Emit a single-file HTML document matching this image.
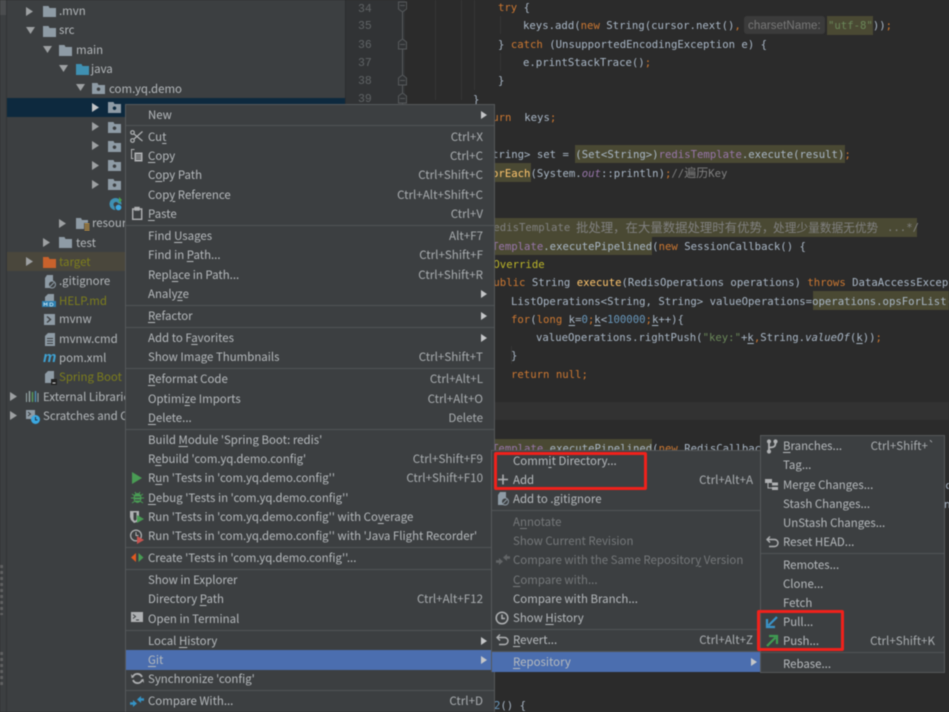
<!DOCTYPE html>
<html><head><meta charset="utf-8"><style>
*{box-sizing:border-box}
html,body{margin:0;padding:0;width:949px;height:712px;overflow:hidden;background:#2b2b2b}
#w{position:relative;width:949px;height:712px;overflow:hidden;filter:blur(.4px)}
.a{position:absolute}
.c{position:absolute;font:10.65px/18px "DejaVu Sans Mono","Liberation Mono","Noto Sans CJK SC",monospace;color:#a9b7c6;white-space:pre;height:18px;margin-top:.5px}
.k{color:#cc7832}.s{color:#6a8759}.m{color:#ffc66d}.p{color:#9876aa}.g{color:#808080}
.h{position:absolute;background:#4a4933}
.n{position:absolute;left:358px;font:11.5px/18px "Liberation Mono",monospace;color:#5f6365;margin-top:2px}
.t{position:absolute;font:11.45px/19px "Noto Sans CJK SC","Liberation Sans",sans-serif;color:#b4b8bb;white-space:nowrap;height:19px}
.y{color:#7d7e1c}
.menu{position:absolute;background:#3c3f41;border:1px solid #55585a}
.r{position:absolute;left:0;right:0;height:19px;font:11.45px/19px "Noto Sans CJK SC","Liberation Sans",sans-serif;color:#b6babd;white-space:nowrap}
.r b{position:absolute;font-weight:normal;top:0}
.r i{position:absolute;font-style:normal;top:0;color:#a9adb0;font-size:11.6px}
.sel b{top:1px}
.m1 b{left:22px}.m1 i{right:11px}
.m2 b{left:21px}.m2 i{right:7px}
.m3 b{left:22px}.m3 i{right:9px}
.d b{color:#75787a}
.sel{background:#4b6eaf}
.sep{position:absolute;left:0;right:0;height:1px;background:#515456}
.ar{position:absolute;width:0;height:0;border-left:6px solid #c4c6c8;border-top:4px solid transparent;border-bottom:4px solid transparent}
u{text-underline-offset:1.5px;text-decoration-thickness:1px}
svg{position:absolute;overflow:visible}
.red{position:absolute;border:3px solid #f0211b;border-radius:2px}
.sp{position:absolute;left:0;width:3px;background:repeating-linear-gradient(#777 0 3px,#3c3f41 3px 6px);opacity:.6}
</style></head><body><div id="w">

<!-- left strip + project panel -->
<div class="a" style="left:0;top:0;width:345px;height:712px;background:#3c3f41"></div>
<div class="a" style="left:6px;top:0;width:1px;height:712px;background:#323436"></div>
<div class="a" style="left:0;top:0;width:6px;height:15px;background:#4b4d4f"></div>
<div class="sp" style="top:565px;height:50px"></div>
<div class="sp" style="top:652px;height:36px"></div>
<div class="a" style="left:7px;top:98px;width:338px;height:19px;background:#0d293e"></div>
<div class="a" style="left:7px;top:252px;width:338px;height:19px;background:#4a473c"></div>

<!-- folder symbols -->
<svg width="0" height="0"><defs>
<symbol id="f" viewBox="0 0 13 11"><path d="M0 0h5.5l1 2H13v9H0z"/></symbol>
<symbol id="fp" viewBox="0 0 13 11"><path fill-rule="evenodd" d="M0 0h5.5l1 2H13v9H0zM6.5 4.4a1.8 1.8 0 1 0 .01 0z"/></symbol>
</defs></svg>

<svg style="left:26px;top:7px" width="8" height="9"><path d="M0 0l7 4.5-7 4.5z" fill="#9da0a2"/></svg>
<svg style="left:26px;top:27px" width="9" height="8"><path d="M0 0h9l-4.5 7z" fill="#9da0a2"/></svg>
<svg style="left:43px;top:46px" width="9" height="8"><path d="M0 0h9l-4.5 7z" fill="#9da0a2"/></svg>
<svg style="left:59px;top:65px" width="9" height="8"><path d="M0 0h9l-4.5 7z" fill="#9da0a2"/></svg>
<svg style="left:76px;top:84px" width="9" height="8"><path d="M0 0h9l-4.5 7z" fill="#9da0a2"/></svg>
<svg style="left:92px;top:103px" width="8" height="9"><path d="M0 0l7 4.5-7 4.5z" fill="#c4c6c8"/></svg>
<svg style="left:92px;top:122px" width="8" height="9"><path d="M0 0l7 4.5-7 4.5z" fill="#9da0a2"/></svg>
<svg style="left:92px;top:141px" width="8" height="9"><path d="M0 0l7 4.5-7 4.5z" fill="#9da0a2"/></svg>
<svg style="left:92px;top:161px" width="8" height="9"><path d="M0 0l7 4.5-7 4.5z" fill="#9da0a2"/></svg>
<svg style="left:92px;top:180px" width="8" height="9"><path d="M0 0l7 4.5-7 4.5z" fill="#9da0a2"/></svg>
<svg style="left:59px;top:219px" width="8" height="9"><path d="M0 0l7 4.5-7 4.5z" fill="#9da0a2"/></svg>
<svg style="left:43px;top:238px" width="8" height="9"><path d="M0 0l7 4.5-7 4.5z" fill="#9da0a2"/></svg>
<svg style="left:26px;top:257px" width="8" height="9"><path d="M0 0l7 4.5-7 4.5z" fill="#9da0a2"/></svg>
<svg style="left:10px;top:392px" width="8" height="9"><path d="M0 0l7 4.5-7 4.5z" fill="#9da0a2"/></svg>
<svg style="left:10px;top:411px" width="8" height="9"><path d="M0 0l7 4.5-7 4.5z" fill="#9da0a2"/></svg>

<svg style="left:43px;top:6px" width="13" height="11" fill="#8e9ba5"><use href="#f"/></svg>
<svg style="left:43px;top:26px" width="13" height="11" fill="#8e9ba5"><use href="#f"/></svg>
<svg style="left:59px;top:45px" width="13" height="11" fill="#8e9ba5"><use href="#f"/></svg>
<svg style="left:76px;top:64px" width="13" height="11" fill="#3f90b2"><use href="#f"/></svg>
<svg style="left:92px;top:83px" width="13" height="11" fill="#8e9ba5"><use href="#fp"/></svg>
<svg style="left:108px;top:102px" width="13" height="11" fill="#8e9ba5"><use href="#fp"/></svg>
<svg style="left:108px;top:122px" width="13" height="11" fill="#8e9ba5"><use href="#fp"/></svg>
<svg style="left:108px;top:141px" width="13" height="11" fill="#8e9ba5"><use href="#fp"/></svg>
<svg style="left:108px;top:160px" width="13" height="11" fill="#8e9ba5"><use href="#fp"/></svg>
<svg style="left:108px;top:179px" width="13" height="11" fill="#8e9ba5"><use href="#fp"/></svg>
<svg style="left:109px;top:197px" width="14" height="14"><circle cx="6.5" cy="7" r="6" fill="#3f90b2"/><circle cx="7" cy="7.5" r="2.5" fill="#3c3f41"/><path d="M10 0l3 3-3 3z" fill="#4aa04a"/><circle cx="9.5" cy="10.5" r="3.4" fill="#3aa7e0" stroke="#3c3f41"/></svg>
<svg style="left:76px;top:218px" width="14" height="13"><path d="M0 0h5l1 2h6v9H0z" fill="#8e9ba5"/><path d="M8 5h6v8H8z" fill="#3c3f41"/><path d="M8.5 6h5M8.5 8h5M8.5 10h5M8.5 12h5" stroke="#d9a343"/></svg>
<svg style="left:59px;top:237px" width="13" height="11" fill="#8e9ba5"><use href="#f"/></svg>
<svg style="left:43px;top:257px" width="13" height="11" fill="#c8622c"><use href="#f"/></svg>

<svg style="left:44px;top:275px" width="12" height="14"><path d="M3 0h6v13H1V3z" fill="#8e9ba5"/><circle cx="8" cy="9.5" r="3.5" fill="#3c3f41" stroke="#8e9ba5"/><path d="M6 11.5l4-4" stroke="#8e9ba5"/></svg>
<svg style="left:42px;top:294px" width="15" height="14"><path d="M6 0h6v7H3V3z" fill="#8e9ba5"/><rect x="0" y="7" width="14" height="6" fill="#2d7fb0"/><path d="M2 12V9l1.5 1.5L5 9v3M8 9v3h2l1-1v-1l-1-1z" stroke="#bfe0f0" fill="none" stroke-width=".8"/></svg>
<svg style="left:44px;top:314px" width="11" height="11"><rect width="11" height="11" fill="#8e9ba5"/><path d="M3 2.5L6.5 5.5 3 8.5" stroke="#3c3f41" stroke-width="1.4" fill="none"/></svg>
<svg style="left:45px;top:333px" width="10" height="13"><path d="M3 0h7v13H0V3z" fill="#8e9ba5"/><path d="M2 5.5h6M2 8h6M2 10.5h6" stroke="#3c3f41"/></svg>
<svg style="left:44px;top:351px" width="13" height="13"><text x="-1" y="11" font-family="Liberation Sans" font-size="15" font-weight="bold" font-style="italic" fill="#3fa0d0" textLength="14">m</text></svg>
<svg style="left:45px;top:371px" width="12" height="14"><path d="M3 0h6v12H0V3z" fill="#8e9ba5"/><rect x="6" y="8" width="6" height="6" fill="#222"/><path d="M7.5 12h3" stroke="#ddd"/></svg>
<svg style="left:26px;top:391px" width="13" height="12"><path d="M.5 2v9" stroke="#9aa" /><path d="M3.5 0v11" stroke="#9aa" stroke-width="1.4"/><path d="M6.5 1v10" stroke="#5a9e5a" stroke-width="1.4"/><path d="M9.5 0v11" stroke="#4b8fb5" stroke-width="1.4"/><path d="M12 2v9" stroke="#9aa"/></svg>
<svg style="left:26px;top:410px" width="14" height="14"><rect width="9" height="9" fill="#8e9ba5"/><path d="M2 2l2.5 2L2 6" stroke="#3c3f41" fill="none"/><circle cx="9.5" cy="9.5" r="4.5" fill="#3aa7e0"/><path d="M9.5 7v3h2" stroke="#234" fill="none"/></svg>

<div class="t" style="left:59px;top:2px">.mvn</div>
<div class="t" style="left:59px;top:21px">src</div>
<div class="t" style="left:76px;top:41px">main</div>
<div class="t" style="left:91px;top:60px">java</div>
<div class="t" style="left:109px;top:80px">com.yq.demo</div>
<div class="t" style="left:92px;top:214px">resources</div>
<div class="t" style="left:76px;top:234px">test</div>
<div class="t y" style="left:59px;top:253px">target</div>
<div class="t" style="left:59px;top:272px">.gitignore</div>
<div class="t y" style="left:59px;top:292px">HELP.md</div>
<div class="t" style="left:59px;top:310px">mvnw</div>
<div class="t" style="left:59px;top:330px">mvnw.cmd</div>
<div class="t" style="left:59px;top:349px">pom.xml</div>
<div class="t y" style="left:59px;top:368px">Spring Boot</div>
<div class="t" style="left:43px;top:388px">External Libraries</div>
<div class="t" style="left:43px;top:407px">Scratches and Consoles</div>

<!-- editor -->
<div class="a" style="left:345px;top:0;width:60px;height:712px;background:#313335"></div>
<div class="a" style="left:345px;top:0;width:1px;height:712px;background:#2a2c2e"></div>
<div class="a" style="left:405px;top:402px;width:544px;height:18px;background:#323232"></div>
<div class="a" style="left:435px;top:0;width:1px;height:100px;background:#373737"></div>
<div class="a" style="left:461px;top:0;width:1px;height:100px;background:#373737"></div>
<div class="a" style="left:474px;top:0;width:1px;height:90px;background:#373737"></div>
<div class="a" style="left:500px;top:16px;width:1px;height:18px;background:#373737"></div>
<div class="a" style="left:500px;top:53px;width:1px;height:18px;background:#373737"></div>
<div class="a" style="left:511px;top:346px;width:1px;height:18px;background:#373737"></div>

<div class="n" style="top:-1px">34</div><div class="n" style="top:16px">35</div><div class="n" style="top:35px">36</div><div class="n" style="top:53px">37</div><div class="n" style="top:71px">38</div><div class="n" style="top:89px">39</div>
<svg style="left:398px;top:0" width="10" height="104" fill="none" stroke="#56595b"><path d="M4.5 12V104"/><path d="M.5 2h8v7l-4 3-4-3zM2 5.500h5"/><path d="M.5 49v-7l4-3 4 3v7zM2 44.500h5" fill="#313335"/><path d="M.5 85v-7l4-3 4 3v7zM2 80.500h5" fill="#313335"/><path d="M.5 103v-7l4-3 4 3v7zM2 98.500h5" fill="#313335"/></svg>

<div class="c k" style="left:498px;top:-2px">try <span style="color:#a9b7c6">{</span></div>
<div class="a" style="left:744px;top:16px;width:81px;height:18px;background:#3b3b3b;border-radius:3px"></div>
<div class="h" style="left:827px;top:16px;width:46px;height:19px"></div>
<div class="c" style="left:523px;top:16px">keys.add(<span class="k">new</span> String(cursor.next()<span class="k">,</span></div>
<div class="c" style="left:748px;top:16px;color:#787878;font-family:'Liberation Sans',sans-serif;font-size:11.5px;letter-spacing:.1px">charsetName:</div>
<div class="c" style="left:828px;top:16px"><span class="s">"utf-8"</span>))<span class="k">;</span></div>
<div class="c" style="left:498px;top:35px">} <span class="k">catch</span> (UnsupportedEncodingException e) {</div>
<div class="c" style="left:523px;top:53px">e.printStackTrace()<span class="k">;</span></div>
<div class="c" style="left:498px;top:71px">}</div>
<div class="c" style="left:473px;top:90px">}</div>
<div class="c" style="left:473px;top:108px"><span class="k">return</span>  keys<span class="k">;</span></div>
<div class="h" style="left:575px;top:145px;width:270px;height:18px"></div>
<div class="c" style="left:460px;top:145px">Set&lt;String&gt; set = (Set&lt;String&gt;)<span class="p">redisTemplate</span>.execute(result)<span class="k">;</span></div>
<div class="h" style="left:460px;top:163px;width:71px;height:19px"></div>
<div class="c" style="left:460px;top:163px">set.<span class="m">forEach</span>(System.<span class="p"><em>out</em></span>::println)<span class="k">;</span><span class="g">//<span style="font-size:12px">遍历</span>Key</span></div>

<div class="h" style="left:460px;top:218px;width:457px;height:19px"></div>
<div class="c g" style="left:487px;top:218px">redisTemplate</div>
<div class="c g" style="left:576px;top:218px;font-size:12.4px">批处理，在大量数据处理时有优势，</div>
<div class="c g" style="left:773px;top:218px;font-size:11.7px">处理少量数据无优势</div>
<div class="c g" style="left:887px;top:218px">...*/</div>
<div class="h" style="left:460px;top:237px;width:192px;height:18px"></div>
<div class="c" style="left:460px;top:237px"><span class="p">redisTemplate</span>.executePipelined(<span class="k">new</span> SessionCallback() {</div>
<div class="c" style="left:487px;top:255px;color:#bbb529">@Override</div>
<div class="c" style="left:487px;top:273px"><span class="k">public</span> String <span class="m">execute</span>(RedisOperations operations) <span class="k">throws</span> DataAccessException {</div>
<div class="h" style="left:813px;top:291px;width:136px;height:19px"></div>
<div class="c" style="left:511px;top:292px">ListOperations&lt;String, String&gt; valueOperations=operations.opsForList();</div>
<div class="c" style="left:511px;top:310px"><span class="k">for</span>(<span class="k">long</span> <u>k</u>=<span style="color:#6897bb">0</span><span class="k">;</span><u>k</u>&lt;<span style="color:#6897bb">100000</span><span class="k">;</span><u>k</u>++){</div>
<div class="c" style="left:536px;top:328px">valueOperations.rightPush(<span class="s">"key:"</span>+<u>k</u><span class="k">,</span>String.<em>valueOf</em>(<u>k</u>))<span class="k">;</span></div>
<div class="c" style="left:511px;top:346px">}</div>
<div class="c" style="left:511px;top:365px"><span class="k">return null;</span></div>
<div class="h" style="left:460px;top:439px;width:192px;height:18px"></div>
<div class="c" style="left:460px;top:439px"><span class="p">redisTemplate</span>.executePipelined(<span class="k">new</span> RedisCallback&lt;String&gt;() {</div>
<div class="c" style="left:945px;top:476px">c</div>
<div class="c" style="left:944px;top:495px">n)</div>
<div class="c" style="left:494px;top:696px"><span style="color:#6897bb">2</span>() {</div>

<!-- main menu -->
<div class="menu m1" style="left:125px;top:104px;width:370px;height:620px">
<div class="r" style="top:1px"><b>New</b></div>
<div class="sep" style="top:20px"></div>
<div class="r" style="top:23px"><b>Cu<u>t</u></b><i>Ctrl+X</i></div>
<div class="r" style="top:42px"><b><u>C</u>opy</b><i>Ctrl+C</i></div>
<div class="r" style="top:61px"><b>C<u>o</u>py Path</b><i>Ctrl+Shift+C</i></div>
<div class="r" style="top:81px"><b>Cop<u>y</u> Reference</b><i>Ctrl+Alt+Shift+C</i></div>
<div class="r" style="top:100px"><b><u>P</u>aste</b><i>Ctrl+V</i></div>
<div class="sep" style="top:120px"></div>
<div class="r" style="top:122px"><b>Find <u>U</u>sages</b><i>Alt+F7</i></div>
<div class="r" style="top:141px"><b>Find in <u>P</u>ath...</b><i>Ctrl+Shift+F</i></div>
<div class="r" style="top:161px"><b>Repl<u>a</u>ce in Path...</b><i>Ctrl+Shift+R</i></div>
<div class="r" style="top:180px"><b>Analy<u>z</u>e</b></div>
<div class="sep" style="top:200px"></div>
<div class="r" style="top:202px"><b><u>R</u>efactor</b></div>
<div class="sep" style="top:222px"></div>
<div class="r" style="top:224px"><b>Add to F<u>a</u>vorites</b></div>
<div class="r" style="top:243px"><b>Show Image Thumbnails</b><i>Ctrl+Shift+T</i></div>
<div class="sep" style="top:263px"></div>
<div class="r" style="top:265px"><b><u>R</u>eformat Code</b><i>Ctrl+Alt+L</i></div>
<div class="r" style="top:285px"><b>Optimi<u>z</u>e Imports</b><i>Ctrl+Alt+O</i></div>
<div class="r" style="top:304px"><b><u>D</u>elete...</b><i>Delete</i></div>
<div class="sep" style="top:324px"></div>
<div class="r" style="top:326px"><b>Build <u>M</u>odule 'Spring Boot:  redis'</b></div>
<div class="r" style="top:345px"><b>R<u>e</u>build 'com.yq.demo.config'</b><i>Ctrl+Shift+F9</i></div>
<div class="r" style="top:364px"><b>R<u>u</u>n 'Tests in 'com.yq.demo.config''</b><i>Ctrl+Shift+F10</i></div>
<div class="r" style="top:384px"><b><u>D</u>ebug 'Tests in 'com.yq.demo.config''</b></div>
<div class="r" style="top:403px"><b>Run 'Tests in 'com.yq.demo.config'' with Co<u>v</u>erage</b></div>
<div class="r" style="top:422px"><b>Run 'Tests in 'com.yq.demo.config'' with 'Java Flight Recorder'</b></div>
<div class="sep" style="top:442px"></div>
<div class="r" style="top:444px"><b>Create 'Tests in 'com.yq.demo.config''...</b></div>
<div class="sep" style="top:464px"></div>
<div class="r" style="top:466px"><b>Show in Explorer</b></div>
<div class="r" style="top:485px"><b>Directory <u>P</u>ath</b><i>Ctrl+Alt+F12</i></div>
<div class="r" style="top:505px"><b>Open in Terminal</b></div>
<div class="sep" style="top:525px"></div>
<div class="r" style="top:527px"><b>Local <u>H</u>istory</b></div>
<div class="r sel" style="top:545px;height:20px"><b><u>G</u>it</b></div>
<div class="r" style="top:565px"><b>Synchronize 'config'</b></div>
<div class="sep" style="top:585px"></div>
<div class="r" style="top:587px"><b>Compare With...</b><i>Ctrl+D</i></div>
</div>
<div class="ar" style="left:481px;top:111px"></div>
<div class="ar" style="left:481px;top:290px"></div>
<div class="ar" style="left:481px;top:312px"></div>
<div class="ar" style="left:481px;top:334px"></div>
<div class="ar" style="left:481px;top:637px"></div>
<div class="ar" style="left:481px;top:656px"></div>

<!-- menu icons -->
<svg style="left:130px;top:130px" width="13" height="13" fill="none" stroke="#afb1b3" stroke-width="1.2"><circle cx="2.5" cy="2.5" r="1.8"/><circle cx="2.5" cy="10.5" r="1.8"/><path d="M4 4l8.5 7M4 9l8.5-7.5"/></svg>
<svg style="left:131px;top:149px" width="13" height="13" fill="none" stroke="#afb1b3"><path d="M3.5.5H.5v9h2"/><rect x="3.5" y="3.5" width="8" height="9" fill="#afb1b3" stroke="none"/><path d="M5 6h5M5 8h5M5 10h5" stroke="#3c3f41"/></svg>
<svg style="left:132px;top:207px" width="11" height="13" fill="none" stroke="#afb1b3" stroke-width="1.4"><path d="M3 2H.7v10.3h9V2H7"/><rect x="3" y=".5" width="4" height="2.5" fill="#afb1b3"/></svg>
<svg style="left:132px;top:472px" width="11" height="12"><path d="M0 0l10 6-10 6z" fill="#499c54"/></svg>
<svg style="left:131px;top:491px" width="13" height="13"><ellipse cx="6.5" cy="7" rx="4" ry="5" fill="#499c54"/><path d="M1 3l3 2M12 3L9 5M0 7h3M10 7h3M1 12l3-2M12 12l-3-2M4 1l1 2M9 1L8 3" stroke="#499c54"/><path d="M4 6h5M4 9h5" stroke="#3c3f41"/></svg>
<svg style="left:130px;top:510px" width="14" height="14"><path d="M0 1h9v5l-2 6-3 1-3-3-1-3z" fill="#afb1b3"/><path d="M3.500 2.500h3v7l-1.500 1.500-1.500-1.500z" fill="#3c3f41"/><path d="M7 5l7 4-7 4z" fill="#499c54"/></svg>
<svg style="left:130px;top:529px" width="14" height="15"><circle cx="6" cy="6.500" r="5.400" fill="none" stroke="#afb1b3" stroke-width="1.200"/><path d="M6 3v3.500H8.500" fill="none" stroke="#afb1b3"/><path d="M7 7l7 4-7 4z" fill="#c75450"/></svg>
<svg style="left:131px;top:552px" width="13" height="12"><path d="M5 1v9L0 5.500z" fill="#e05a20"/><path d="M7.500 1v9L12.500 5.500z" fill="#499c54"/></svg>
<svg style="left:131px;top:612px" width="12" height="11"><rect width="12" height="10" fill="#afb1b3"/><path d="M2 2.500L4.500 4.500 2 6.500M5 8h3" stroke="#3c3f41" fill="none"/></svg>
<svg style="left:131px;top:672px" width="13" height="13" fill="none" stroke="#afb1b3" stroke-width="1.800"><path d="M11 5A5 5 0 0 0 2 4.500M2 8a5 5 0 0 0 9 .5"/><path d="M0 2l3 3.500L.5 6zM13 11l-3-3.500 2.500-.5z" fill="#afb1b3" stroke="none"/></svg>
<svg style="left:130px;top:695px" width="14" height="13"><path d="M7 4.500L11 1v2.200h3v2.600h-3V8z" fill="#3592c4"/><path d="M7 8.500L3 5v2.200H0v2.600h3V12z" fill="#3592c4"/></svg>

<!-- git submenu -->
<div class="menu m2" style="left:491px;top:450px;width:270px;height:222px">
<div class="r" style="top:1px"><b>Comm<u>i</u>t Directory...</b></div>
<div class="r" style="top:20px"><b>Add</b><i>Ctrl+Alt+A</i></div>
<div class="r" style="top:39px"><b>Add to .gitignore</b></div>
<div class="sep" style="top:59px"></div>
<div class="r d" style="top:62px"><b>A<u>n</u>notate</b></div>
<div class="r d" style="top:81px"><b>Show Current Revision</b></div>
<div class="r d" style="top:100px"><b>Compare with the Same Repositor<u>y</u> Version</b></div>
<div class="r d" style="top:120px"><b><u>C</u>ompare with...</b></div>
<div class="r" style="top:139px"><b>Compare with Branch...</b></div>
<div class="r" style="top:158px"><b>Show <u>H</u>istory</b></div>
<div class="sep" style="top:178px"></div>
<div class="r" style="top:180px"><b><u>R</u>evert...</b><i>Ctrl+Alt+Z</i></div>
<div class="sep" style="top:200px"></div>
<div class="r sel" style="top:201px;height:20px"><b><u>R</u>epository</b></div>
</div>
<div class="ar" style="left:751px;top:658px"></div>
<svg style="left:497px;top:474px" width="12" height="12"><path d="M1 5.500h10M6 .5v10" stroke="#afb1b3" stroke-width="1.500"/></svg>
<svg style="left:497px;top:492px" width="12" height="14"><path d="M3 0h6v13H1V3z" fill="#8e9ba5"/><circle cx="8" cy="9.500" r="3.500" fill="#3c3f41" stroke="#8e9ba5"/><path d="M6 11.500l4-4" stroke="#8e9ba5"/></svg>
<svg style="left:496px;top:553px" width="14" height="13"><path d="M7 4.500L11 1v2.200h3v2.600h-3V8z" fill="#626567"/><path d="M7 8.500L3 5v2.200H0v2.600h3V12z" fill="#626567"/></svg>
<svg style="left:495px;top:611px" width="14" height="14" fill="none" stroke="#afb1b3" stroke-width="1.500"><circle cx="7" cy="7" r="5.800"/><path d="M7 3.500V7.500H10"/></svg>
<svg style="left:496px;top:634px" width="13" height="12" fill="none" stroke="#afb1b3" stroke-width="1.400"><path d="M1 3.500H8.500a3.500 3.500 0 0 1 0 7H3"/><path d="M4 .5L1 3.500 4 6.500"/></svg>

<!-- repository submenu -->
<div class="menu m3" style="left:760px;top:435px;width:185px;height:238px">
<div class="r" style="top:1px"><b><u>B</u>ranches...</b><i>Ctrl+Shift+`</i></div>
<div class="r" style="top:20px"><b>Tag...</b></div>
<div class="r" style="top:40px"><b>Merge Changes...</b></div>
<div class="r" style="top:59px"><b>Stash Changes...</b></div>
<div class="r" style="top:78px"><b>UnStash Changes...</b></div>
<div class="r" style="top:97px"><b>Reset HEAD...</b></div>
<div class="sep" style="top:117px"></div>
<div class="r" style="top:120px"><b>Remotes...</b></div>
<div class="r" style="top:139px"><b>Clone...</b></div>
<div class="r" style="top:158px"><b>Fetch</b></div>
<div class="r" style="top:177px"><b>Pull...</b></div>
<div class="r" style="top:196px"><b>Push...</b><i>Ctrl+Shift+K</i></div>
<div class="sep" style="top:216px"></div>
<div class="r" style="top:219px"><b>Rebase...</b></div>
</div>
<svg style="left:766px;top:440px" width="12" height="13" fill="none" stroke="#afb1b3" stroke-width="1.800"><path d="M3 1v11M3 7.500C9 7.500 9.500 6 9.500 2"/><circle cx="3" cy="1.500" r="1.200" fill="#afb1b3"/><circle cx="3" cy="11.500" r="1.200" fill="#afb1b3"/><circle cx="9.500" cy="1.500" r="1.200" fill="#afb1b3"/></svg>
<svg style="left:765px;top:479px" width="14" height="12"><rect x="0" y="0" width="7" height="4" fill="#afb1b3"/><path d="M3 4v5h4" stroke="#afb1b3" fill="none"/><rect x="7" y="3.500" width="6" height="3" fill="#afb1b3"/><rect x="7" y="8" width="6" height="3" fill="#afb1b3"/></svg>
<svg style="left:766px;top:536px" width="13" height="12" fill="none" stroke="#afb1b3" stroke-width="1.400"><path d="M1 3.500H8.500a3.500 3.500 0 0 1 0 7H3"/><path d="M4 .5L1 3.500 4 6.500"/></svg>
<svg style="left:766px;top:616px" width="12" height="12"><path d="M11 1L2.500 9.500M1 3v8h8" fill="none" stroke="#3a93c8" stroke-width="2.200"/></svg>
<svg style="left:766px;top:635px" width="12" height="12"><path d="M1 11L9.500 2.500M3 1h8v8" fill="none" stroke="#3f9b52" stroke-width="2.200"/></svg>

<div class="red" style="left:494px;top:452px;width:153px;height:38px"></div>
<div class="red" style="left:757px;top:610px;width:87px;height:41px"></div>
</div></body></html>
